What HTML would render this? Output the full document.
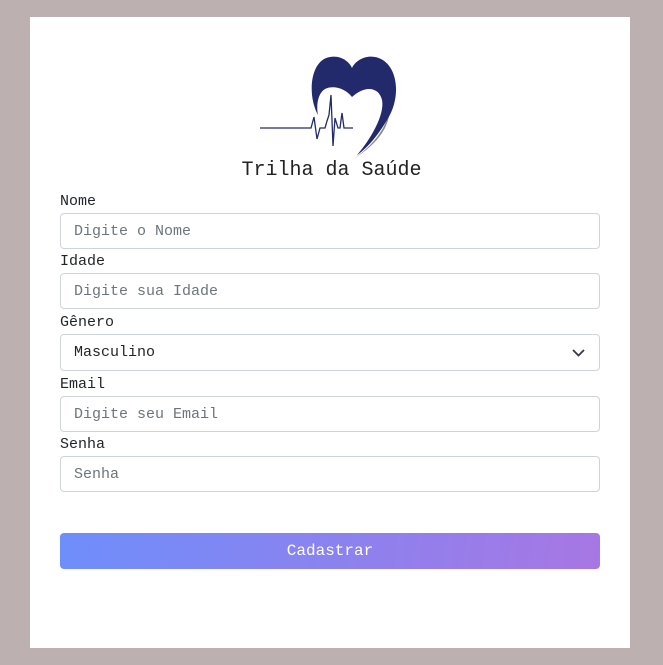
<!DOCTYPE html>
<html><head><meta charset="utf-8"><style>
*{box-sizing:border-box;margin:0;padding:0}
body{width:663px;height:665px;background:#bcb1b0;font-family:"Liberation Mono",monospace;position:relative;overflow:hidden}
.card{position:absolute;left:30px;top:17px;width:600px;height:631px;background:#fff}
.lbl{position:absolute;left:60px;font-size:15px;color:#212529}
.inp{position:absolute;left:60px;width:540px;height:36px;border:1px solid #ced4da;border-radius:4px;font-size:15px;color:#6c757d;padding-left:13px;line-height:36px}
.title{position:absolute;left:0;width:663px;top:159px;text-align:center;font-size:20px;color:#222}
.btn{position:absolute;left:60px;top:533px;width:540px;height:36px;border-radius:4px;background:linear-gradient(100deg,#6e8efb,#a777e3);color:#fff;text-align:center;line-height:36px;font-size:16px}
</style></head><body>
<div class="card"></div>
<svg style="position:absolute;left:255px;top:55px" width="150" height="105" viewBox="0 0 150 105">
<path d="M133 45 C 140 70 120 90 100 103 C 118 90 136 70 135 45 Z" fill="#888"/>
<path d="M63 60 C 52 40 55 5 75 2 C 87 0 95 8 97 13 C 100 6 110 0 120 2 C 142 6 148 40 132 65 C 122 82 110 95 102 100 C 115 85 130 60 127 45 C 124 32 110 30 97 42 C 90 33 78 30 70 34 C 63 38 61 50 63 60 Z" fill="#232a6c"/>
<polyline points="5,73 56,73 59,62 62,84 65,73 70,73 72,66 74,60 76,40 78,91 80,63 83,73 85,73 87,58 89,73 98,73" fill="none" stroke="#232a6c" stroke-width="1.3"/>
</svg>
<div class="title">Trilha da Saúde</div>
<div class="lbl" style="top:193px">Nome</div>
<div class="inp" style="top:213px">Digite o Nome</div>
<div class="lbl" style="top:253px">Idade</div>
<div class="inp" style="top:273px">Digite sua Idade</div>
<div class="lbl" style="top:314px">Gênero</div>
<div class="inp" style="top:334px;height:37px;color:#212529">Masculino
<svg style="position:absolute;right:14px;top:14px" width="13" height="8" viewBox="0 0 13 8"><path d="M1 1 L6.5 6.5 L12 1" fill="none" stroke="#343a40" stroke-width="1.8"/></svg></div>
<div class="lbl" style="top:376px">Email</div>
<div class="inp" style="top:396px">Digite seu Email</div>
<div class="lbl" style="top:436px">Senha</div>
<div class="inp" style="top:456px">Senha</div>
<div class="btn">Cadastrar</div>
</body></html>
